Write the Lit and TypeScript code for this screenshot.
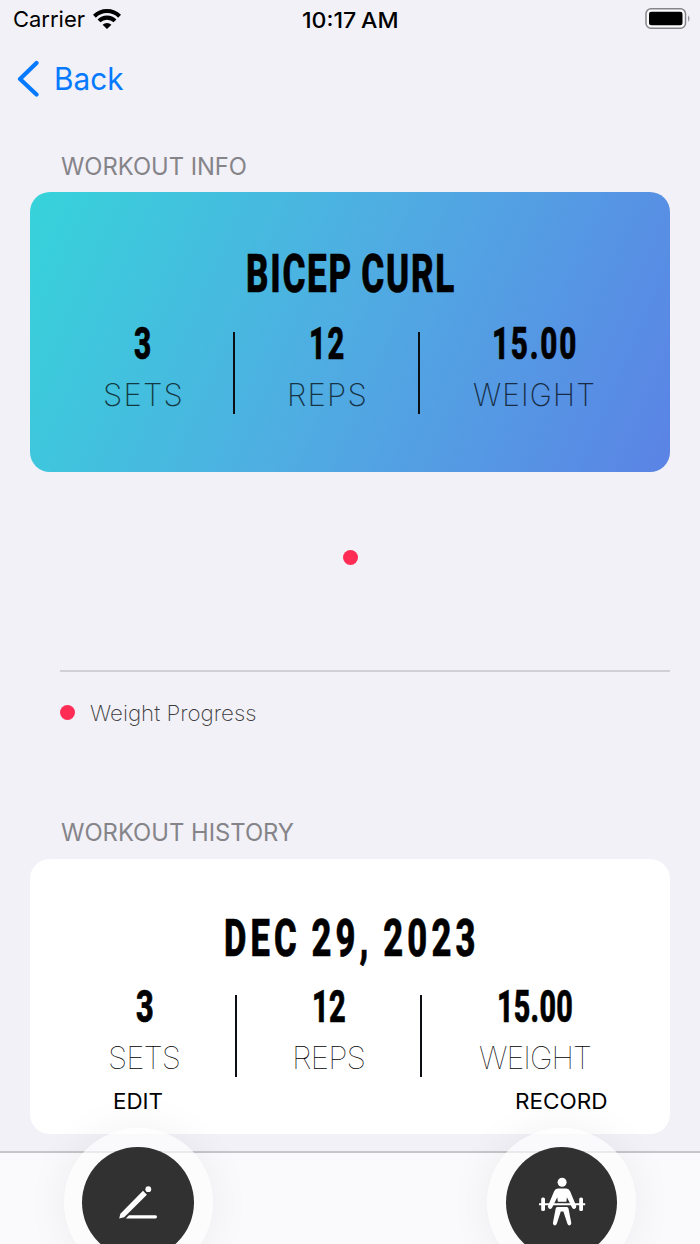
import { LitElement, html, svg, css } from "lit";
import { customElement, property } from "lit/decorators.js";

/** One line of text set to an exact width; its box is the cap height. */
@customElement("fit-text")
class FitText extends LitElement {
  @property() text = "";
  @property({ type: Number }) w = 100;
  @property({ type: Number }) cap = 16;
  /** Tracking in em, applied before the line is fitted. */
  @property({ type: Number }) track = 0;
  @property({ type: Boolean }) narrow = false;

  static styles = css`
    :host { display: block; flex: none; }
    svg { display: block; overflow: visible; }
    text { fill: currentColor; white-space: pre; }
    .narrow { font-family: Roboto, sans-serif; font-weight: 800; stroke: currentColor; stroke-width: 0.7px; word-spacing: -0.06em; }
  `;

  render() {
    const size = this.cap / (this.narrow ? 0.711 : 0.727);
    return html`<svg width=${this.w} height=${this.cap}>${svg`<text
      class=${this.narrow ? "narrow" : ""} x="0" y=${this.cap} font-size=${size}
      letter-spacing=${this.track * size}
      textLength=${this.w} lengthAdjust="spacingAndGlyphs">${this.text}</text>`}</svg>`;
  }
}

interface Stat { value: string; vw: number; label: string; lw: number; }

@customElement("app-root")
class AppRoot extends LitElement {
  static styles = css`
    :host {
      display: block; position: relative; width: 700px; height: 1244px; overflow: hidden;
      background: #f2f1f7; color: #000; font-family: Inter, "Liberation Sans", sans-serif;
    }
    .status { display: grid; grid-template-columns: 1fr auto 1fr; align-items: start; height: 40px; padding: 0 10px 0 12.5px; box-sizing: border-box; }
    .carrier { display: flex; gap: 8px; padding-top: 11px; }
    .wifi { margin-top: -3px; }
    .time { font-weight: 550; padding-top: 11.6px; margin-left: -2.5px; word-spacing: -0.08em; }
    .battery { justify-self: end; padding-top: 7px; margin-right: -1px; }
    svg { display: block; }
    .nav { display: flex; align-items: flex-start; height: 118px; color: #067aff; padding: 20px 0 0 16px; gap: 15px; box-sizing: border-box; }
    .nav fit-text { margin-top: 7.5px; }
    .heading { color: #858489; padding-left: 60.5px; }
    .card { margin: 0 30px; border-radius: 20px; box-sizing: border-box; display: flex; flex-direction: column; align-items: center; }
    .info { margin-top: 16.8px; height: 280px; padding-top: 61px; background: linear-gradient(113.6deg, #36d3da, #4fade2 48%, #5b83e5); }
    .info .title { margin-bottom: 35.3px; padding-left: 1px; }
    .past { margin-top: 17.3px; height: 275.5px; padding-top: 60px; background: #fff; }
    .past .title { margin-bottom: 34.6px; padding-left: 4px; }
    .stats { display: flex; width: 595px; }
    .past .stats { width: 595px; padding-left: 1px; box-sizing: border-box; }
    .stat { display: flex; flex-direction: column; align-items: center; gap: 24.3px; }
    .stat:nth-of-type(1) { width: 181px; }
    .stat:nth-of-type(2) { width: 182.5px; }
    .stat:nth-of-type(3) { width: 228px; }
    .past .stat:nth-of-type(1) { width: 182px; }
    .past .stat:nth-of-type(2) { width: 183px; }
    .past .stat:nth-of-type(3) { width: 226px; }
    .value { padding-left: 2px; }
    .past .value { padding-left: 1px; }
    .label { font-weight: 200; padding-left: 1px; }
    .info .label { opacity: .7; }
    .past .label { font-weight: 100; padding-left: 0; }
    .rule { width: 2px; flex: none; height: 81.5px; margin-top: 5.5px; background: #0b0f14; display: block; }
    .chart { height: 200px; margin: 0 30px 0 60px; border-bottom: 2px solid #d1d0d6; box-sizing: border-box; }
    .plot { display: flex; justify-content: center; padding-top: 78.3px; margin-left: -30px; }
    .dot { width: 15px; height: 15px; border-radius: 50%; background: #ff2d55; flex: none; }
    .legend { display: flex; align-items: center; gap: 15px; margin: 33px 0 0 60px; height: 15px; font-weight: 200; color: #3c3c40; }
    .history { margin-top: 104.3px; }
    .bar { position: absolute; left: 0; right: 0; top: 1151px; height: 93px; background: #fafafc; border-top: 2px solid #c6c6ca; box-sizing: border-box; }
    .action { position: absolute; top: 1093.2px; width: 150px; display: flex; flex-direction: column; align-items: center; gap: 19.3px; }
    .edit { left: 63px; }
    .record { left: 486.6px; }
    .halo { width: 149px; height: 149px; border-radius: 50%; background: rgba(253,253,254,.65); box-shadow: 0 0 44px rgba(0,0,0,.06); display: grid; place-items: center; }
    .disc { width: 111.5px; height: 111.5px; border-radius: 50%; background: #313131; display: grid; place-items: center; }
  `;

  private stats(items: Stat[], valueTrack: number, labelTrack: number) {
    return html`<div class="stats">${items.map((s, i) => html`
      ${i ? html`<i class="rule"></i>` : ""}
      <div class="stat">
        <fit-text class="value" narrow .text=${s.value} .w=${s.vw} .cap=${31.5} .track=${valueTrack}></fit-text>
        <fit-text class="label" .text=${s.label} .w=${s.lw} .cap=${22.6} .track=${labelTrack}></fit-text>
      </div>`)}</div>`;
  }

  render() {
    return html`
      <div class="status">
        <div class="carrier">
          <fit-text .text=${"Carrier"} .w=${72} .cap=${16}></fit-text>
          <svg class="wifi" width="28" height="22" viewBox="0 0 28 22">
            <g fill="none" stroke="#000" stroke-width="4.1">
              <path d="M1.4 8.2A18 18 0 0 1 26.6 8.2"/><path d="M6 12.9A11.5 11.5 0 0 1 22 12.9"/>
            </g>
            <path d="M14 21L9.6 16.7A6.4 6.4 0 0 1 18.4 16.7Z"/>
          </svg>
        </div>
        <fit-text class="time" .text=${"10:17 AM"} .w=${96.5} .cap=${15.7}></fit-text>
        <svg class="battery" width="46" height="23" viewBox="0 0 46 23">
          <rect x="1" y="1.7" width="39.5" height="19.6" rx="5" fill="#fbfbfd" stroke="#858489" stroke-width="1.5"/>
          <rect x="4" y="4.7" width="33.5" height="13.6" rx="2.3"/>
          <path d="M43.2 8.2Q45.8 11.5 43.2 14.8Z" fill="#858489"/>
        </svg>
      </div>
      <div class="nav">
        <svg width="23" height="38" viewBox="0 0 23 38"><path d="M20.5 3L4 19L20.5 34.5" fill="none" stroke="currentColor" stroke-width="4.2" stroke-linecap="round" stroke-linejoin="round"/></svg>
        <fit-text .text=${"Back"} .w=${69.5} .cap=${22.3}></fit-text>
      </div>
      <div class="heading"><fit-text .text=${"WORKOUT INFO"} .w=${186} .cap=${17.2}></fit-text></div>
      <div class="card info">
        <fit-text class="title" narrow .text=${"BICEP CURL"} .w=${210} .cap=${38.7} .track=${0.05}></fit-text>
        ${this.stats([
          { value: "3", vw: 19, label: "SETS", lw: 81 },
          { value: "12", vw: 37, label: "REPS", lw: 81 },
          { value: "15.00", vw: 86, label: "WEIGHT", lw: 123 },
        ], 0.06, 0.04)}
      </div>
      <div class="chart"><div class="plot"><i class="dot"></i></div></div>
      <div class="legend"><i class="dot"></i><fit-text .text=${"Weight Progress"} .w=${166.5} .cap=${15.7}></fit-text></div>
      <div class="heading history"><fit-text .text=${"WORKOUT HISTORY"} .w=${233} .cap=${17.2}></fit-text></div>
      <div class="card past">
        <fit-text class="title" narrow .text=${"DEC 29, 2023"} .w=${255.5} .cap=${36.5} .track=${0.12}></fit-text>
        ${this.stats([
          { value: "3", vw: 18, label: "SETS", lw: 72 },
          { value: "12", vw: 34, label: "REPS", lw: 73 },
          { value: "15.00", vw: 76, label: "WEIGHT", lw: 112 },
        ], 0.01, -0.03)}
      </div>
      <div class="bar"></div>
      <div class="action edit">
        <fit-text .text=${"EDIT"} .w=${50} .cap=${15.5}></fit-text>
        <div class="halo"><div class="disc">
          <svg width="40" height="40" viewBox="0 0 40 40" fill="#fff">
            <path d="M11 33.2H37.5Q39 33.2 39 34.8T37.5 36.4H7.8Z"/>
            <path d="M1.2 36.6L2.4 31.8L25 8.8L28.9 12.7L6.2 35.2Z"/>
            <circle cx="30.3" cy="7.2" r="2.9"/>
          </svg>
        </div></div>
      </div>
      <div class="action record">
        <fit-text .text=${"RECORD"} .w=${92.5} .cap=${15.5}></fit-text>
        <div class="halo"><div class="disc">
          <svg width="48" height="50" viewBox="0 0 48 50" fill="#fff">
            <circle cx="24.1" cy="5.3" r="4.5"/>
            <path d="M20 11.4H28.2Q31 11.6 32.2 14.4L38.3 29.2Q38.4 31.5 36.4 32Q34.8 32 34 30.5L28.9 20.2L28.4 24.8H19.8L19.3 20.2L14.2 30.5Q13.4 32 11.8 32Q9.8 31.5 9.9 29.2L16 14.4Q17.2 11.6 20 11.4Z"/>
            <path d="M1 27.2H47.2" stroke="#fff" stroke-width="2"/>
            <rect x="3.2" y="20.4" width="3.8" height="13.6" rx="1.6"/>
            <rect x="41.2" y="20.4" width="3.8" height="13.6" rx="1.6"/>
            <path d="M19.2 30H29Q30.2 30.3 30.5 31.6L33.3 46Q33.4 48 31.6 48.4Q29.9 48.4 29.4 46.8L25.4 34.4H22.8L18.8 46.8Q18.3 48.4 16.6 48.4Q14.8 48 14.9 46L17.7 31.6Q18 30.3 19.2 30Z"/>
          </svg>
        </div></div>
      </div>`;
  }
}
